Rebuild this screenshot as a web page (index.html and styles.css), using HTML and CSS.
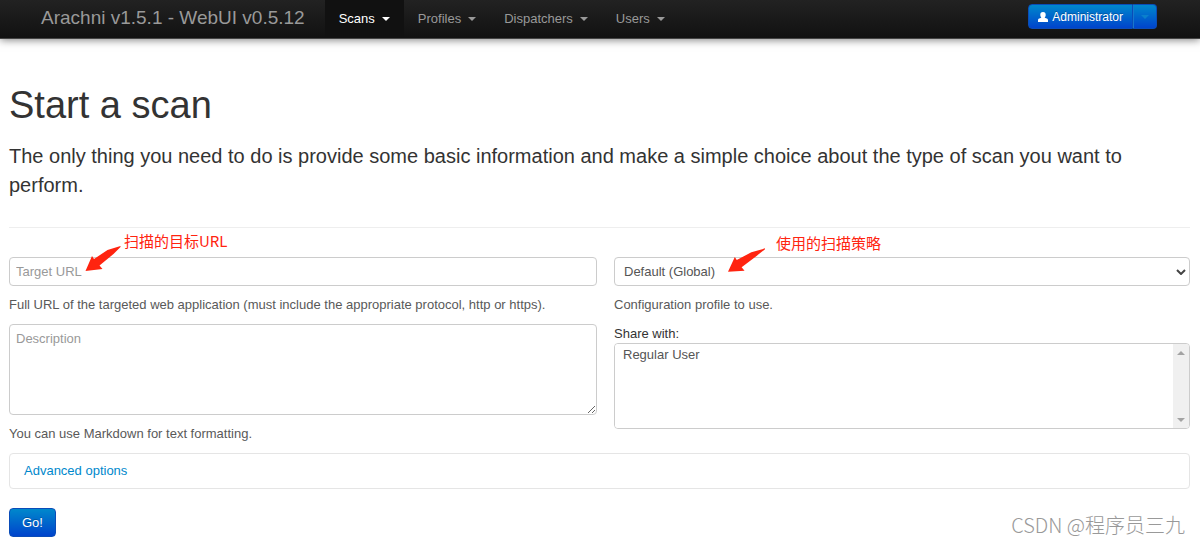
FILE: index.html
```html
<!DOCTYPE html>
<html lang="en">
<head>
<meta charset="utf-8">
<title>Start a scan - Arachni</title>
<link rel="stylesheet" href="styles.css">
</head>
<body>
<header class="navbar">
  <a class="brand" href="#">Arachni v1.5.1 - WebUI v0.5.12</a>
  <nav class="menu">
    <a class="menu-link active" href="#">Scans <span class="caret"></span></a>
    <a class="menu-link" href="#">Profiles <span class="caret"></span></a>
    <a class="menu-link" href="#">Dispatchers <span class="caret"></span></a>
    <a class="menu-link" href="#">Users <span class="caret"></span></a>
  </nav>
  <div class="account">
    <button class="account-name" type="button"><svg class="user-icon" viewBox="0 0 10 10" aria-hidden="true"><path d="M5 0C3.100 0 2.200 1.200 2.300 3 2.300 4.200 2.800 5.200 3.400 5.800L1.200 6.600C.3 7 0 7.600 0 8.600V10H10V8.600C10 7.600 9.700 7 8.800 6.600L6.600 5.800C7.200 5.200 7.700 4.200 7.700 3 7.800 1.200 6.900 0 5 0Z" fill="#fff"/></svg>Administrator</button>
    <button class="account-toggle" type="button" aria-label="Account menu"><span class="caret"></span></button>
  </div>
</header>
<main class="page">
  <h1 class="title">Start a scan</h1>
  <p class="lead">The only thing you need to do is provide some basic information and make a simple choice about the type of scan you want to perform.</p>
  <form class="scan-form">
    <div class="columns">
      <div class="column">
        <input class="field" id="url" type="text" placeholder="Target URL" aria-label="Target URL">
        <label class="help" for="url">Full URL of the targeted web application (must include the appropriate protocol, http or https).</label>
        <textarea class="field description" id="description" placeholder="Description" aria-label="Description"></textarea>
        <label class="help" for="description">You can use Markdown for text formatting.</label>
        <div class="note note-url">
          <svg class="arrow" viewBox="0 0 36 26" aria-hidden="true"><path d="M35 0 22 4 8.500 13 6.500 10 0 25 17 23 14 19.500 28 8 35 1Z" fill="#ff2410"/></svg>
          <span>扫描的目标URL</span>
        </div>
      </div>
      <div class="column">
        <div class="select-box">
          <select class="field profile" id="profile" aria-label="Profile"><option>Default (Global)</option></select>
          <svg class="chevron" viewBox="0 0 10 6" aria-hidden="true"><path d="M1 1 5 5 9 1" fill="none" stroke="#444" stroke-width="2"/></svg>
        </div>
        <label class="help" for="profile">Configuration profile to use.</label>
        <label class="share-label" for="share">Share with:</label>
        <div class="list-box">
          <select class="share" id="share" multiple><option>Regular User</option></select>
          <div class="scrollbar" aria-hidden="true"><span class="scroll-up"></span><span class="scroll-down"></span></div>
        </div>
        <div class="note note-profile">
          <svg class="arrow" viewBox="0 0 38 26" aria-hidden="true"><path d="M38 0 24 4 9 12 7 9 0 24 17 23 14 19.500 29 8 38 1Z" fill="#ff2410"/></svg>
          <span>使用的扫描策略</span>
        </div>
      </div>
    </div>
    <div class="advanced"><a class="advanced-link" href="#">Advanced options</a></div>
    <button class="go" type="button">Go!</button>
  </form>
</main>
<div class="watermark">CSDN @程序员三九</div>
</body>
</html>
```

FILE: styles.css
```css
* { box-sizing: border-box; }
body {
  margin: 0;
  background: #fff;
  color: #333;
  font: 13px/20px "Liberation Sans", Arial, "Noto Sans CJK SC", sans-serif;
}
a { text-decoration: none; }
button, input, select, textarea { font: inherit; }

.navbar {
  display: flex;
  height: 39px;
  padding: 0 43px 0 41px;
  background: linear-gradient(#222, #111);
  border-bottom: 1px solid #444;
  box-shadow: 0 1px 8px rgba(0, 0, 0, .5);
}
.brand { color: #999; font-size: 19px; line-height: 36px; white-space: nowrap; }
.menu { display: flex; margin-left: 20px; }
.menu-link {
  display: flex;
  align-items: center;
  gap: 7px;
  padding: 0 14px;
  color: #999;
  line-height: 36px;
}
.menu-link.active { background: #111; color: #fff; }
.caret {
  border: 4px solid transparent;
  border-top-color: currentColor;
  border-bottom: 0;
}
.account { display: flex; align-self: flex-start; margin: 4px 0 0 auto; height: 25px; }
.account-name, .account-toggle, .go {
  border: 1px solid #0a4cb8;
  background: linear-gradient(#08c, #04c);
  color: #fff;
  text-shadow: 0 -1px 0 rgba(0, 0, 0, .25);
}
.account-name {
  display: flex;
  align-items: center;
  gap: 4px;
  padding: 0 9px;
  border-radius: 4px 0 0 4px;
  font-size: 12px;
}
.account-toggle {
  display: flex;
  align-items: center;
  padding: 0 7px;
  border-left-color: #1778cc;
  border-radius: 0 4px 4px 0;
  color: #0a80cc;
}
.user-icon { width: 10px; height: 10px; }

.page { padding: 46px 10px 8px 9px; }
.title { margin: 0; font-size: 38px; font-weight: 400; line-height: 40px; }
.lead { margin: 17px 0 27px; font-size: 20px; line-height: 29px; }
.scan-form { border-top: 1px solid #eee; padding-top: 29px; }
.columns { display: grid; grid-template-columns: 588fr 576fr; gap: 17px; }
.column { position: relative; display: flex; flex-direction: column; }
.field {
  display: block;
  width: 100%;
  height: 29px;
  margin: 0;
  padding: 4px 6px;
  border: 1px solid #ccc;
  border-radius: 4px;
  background: #fff;
  color: #555;
}
.field::placeholder { color: #999; }
.description { height: 91px; resize: vertical; }
.help { margin: 9px 0; color: #595959; }
.select-box { position: relative; }
.profile { appearance: none; padding: 0 9px; }
.chevron { position: absolute; right: 4px; top: 12px; width: 10px; height: 6px; pointer-events: none; }
.share-label { line-height: 19px; }
.list-box {
  display: flex;
  height: 86px;
  overflow: hidden;
  border: 1px solid #ccc;
  border-radius: 4px;
}
.share {
  flex: 1;
  padding: 3px 6px;
  border: 0;
  outline: 0;
  background: #fff;
  color: #555;
  scrollbar-width: none;
}
.scrollbar {
  display: flex;
  flex-direction: column;
  justify-content: space-between;
  align-items: center;
  width: 16px;
  padding: 7px 0 6px;
  background: #f0f0f0;
}
.scroll-up, .scroll-down { border: 4px solid transparent; }
.scroll-up { border-top: 0; border-bottom-color: #a3a3a3; }
.scroll-down { border-bottom: 0; border-top-color: #a3a3a3; }
.note {
  position: absolute;
  display: flex;
  color: #ff2410;
  font: 15px/20px "Noto Sans CJK SC", sans-serif;
  white-space: nowrap;
  pointer-events: none;
}
.note-url { left: 76px; top: -26px; gap: 2px; }
.note-profile { left: 114px; top: -24px; gap: 11px; }
.arrow { width: 37px; height: 26px; margin-top: 15px; }

.advanced { padding: 7px 14px; border: 1px solid #e5e5e5; border-radius: 4px; }
.advanced-link { color: #08c; }
.go {
  display: block;
  height: 29px;
  margin-top: 19px;
  padding: 0 12px;
  border-radius: 4px;
}
.watermark {
  position: absolute;
  right: 15px;
  bottom: 6px;
  color: #999;
  font: 20px/26px "Noto Sans CJK SC", sans-serif;
  font-weight: 300;
}
```
